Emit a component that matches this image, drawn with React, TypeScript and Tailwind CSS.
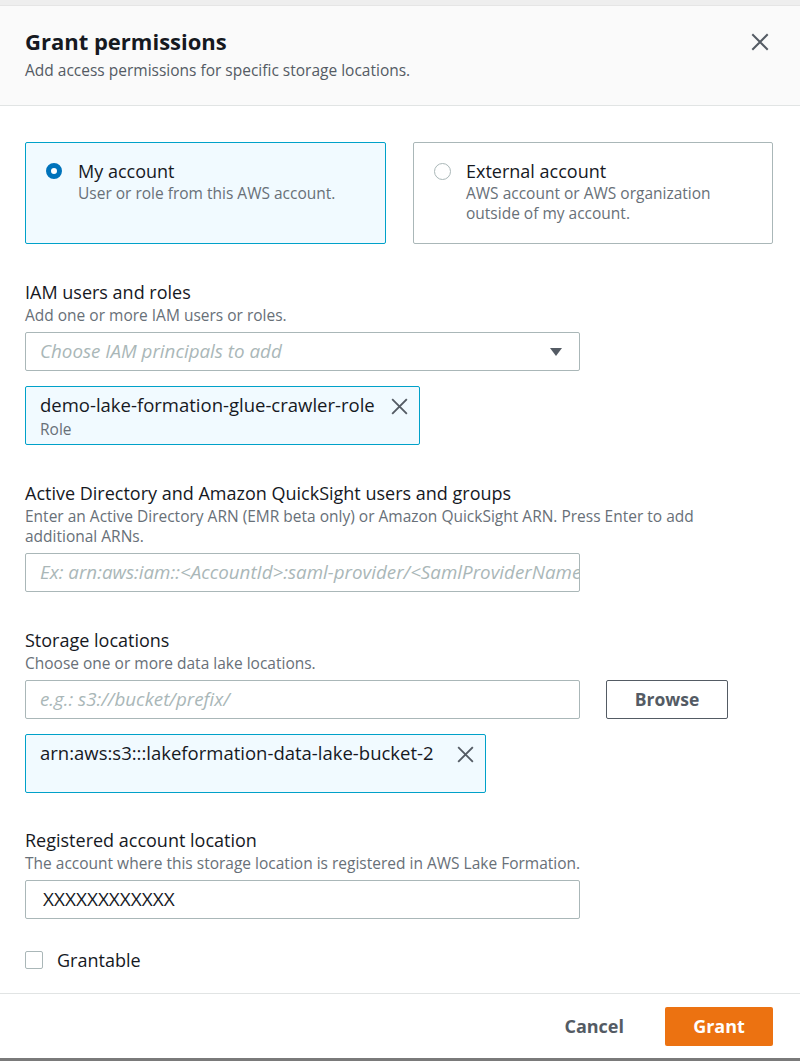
import React from "react";

const font = { fontFamily: '"Open Sans", "Noto Sans", sans-serif' };

function XIcon({ size = 20, className = "" }: { size?: number; className?: string }) {
  return (
    <svg width={size} height={size} viewBox="0 0 20 20" className={className}>
      <path d="M3 3 L17 17 M17 3 L3 17" stroke="currentColor" strokeWidth="2" strokeLinecap="square" fill="none" />
    </svg>
  );
}

function Field({ label, desc, children }: { label: string; desc: React.ReactNode; children: React.ReactNode }) {
  return (
    <div className="flex flex-col">
      <div className="text-[18px] leading-[26px] text-[#16191f]">{label}</div>
      <div className="text-[15.5px] leading-[20px] text-[#687078]">{desc}</div>
      <div className="mt-[7px] flex flex-col">{children}</div>
    </div>
  );
}

function TextInput({ placeholder, value }: { placeholder?: string; value?: string }) {
  return (
    <div className="w-[555px] h-[39px] border border-[#aab7b8] rounded-[2px] flex items-center px-[14px] bg-white overflow-hidden">
      {value ? (
        <span className="text-[19px] text-[#16191f] pl-[3px]">{value}</span>
      ) : (
        <span className="text-[18.8px] italic text-[#aab7b8] whitespace-nowrap">{placeholder}</span>
      )}
    </div>
  );
}

export default function App() {
  return (
    <div style={font} className="w-[800px] h-[1061px] bg-white flex flex-col overflow-hidden">
      <div className="h-[6px] bg-[#eeeeee] border-b border-[#e5e5e5]" />
      <div className="h-[100px] bg-[#fafafa] border-b border-[#e1e4e4] px-[25px] flex items-start justify-between">
        <div className="flex flex-col pt-[21px]">
          <div className="text-[22px] leading-[28px] font-bold text-[#16191f]">Grant permissions</div>
          <div className="text-[15.5px] leading-[20px] text-[#545b64] mt-[5px]">Add access permissions for specific storage locations.</div>
        </div>
        <div className="pt-[26px] pr-[5px] text-[#545b64]">
          <XIcon size={20} />
        </div>
      </div>

      <div className="flex-1 px-[25px] pt-[36px] flex flex-col">
        <div className="flex gap-[27px]">
          <div className="w-[361px] h-[102px] border border-[#00a1c9] bg-[#f1faff] rounded-[2px] flex px-[20px] pt-[16px] gap-[16px]">
            <div className="mt-[4px] w-[16px] h-[16px] rounded-full border-[5px] border-[#0073bb] bg-white shrink-0" />
            <div className="flex flex-col">
              <div className="text-[18px] leading-[24px] text-[#16191f]">My account</div>
              <div className="text-[15.5px] leading-[20px] text-[#687078]">User or role from this AWS account.</div>
            </div>
          </div>
          <div className="w-[360px] h-[102px] border border-[#aab7b8] bg-white rounded-[2px] flex px-[20px] pt-[16px] gap-[15px]">
            <div className="mt-[4px] w-[17px] h-[17px] rounded-full border border-[#aab7b8] bg-white shrink-0" />
            <div className="flex flex-col">
              <div className="text-[18px] leading-[24px] text-[#16191f]">External account</div>
              <div className="text-[15.5px] leading-[20px] text-[#687078]">
                AWS account or AWS organization
                <br />
                outside of my account.
              </div>
            </div>
          </div>
        </div>

        <div className="mt-[35px]">
          <Field label="IAM users and roles" desc="Add one or more IAM users or roles.">
            <div className="w-[555px] h-[39px] border border-[#aab7b8] rounded-[2px] flex items-center justify-between px-[14px] bg-white">
              <span className="text-[18.8px] italic text-[#aab7b8]">Choose IAM principals to add</span>
              <svg width="14" height="10" viewBox="0 0 14 10" className="mr-[2px]">
                <path d="M1 1 L13 1 L7 9 Z" fill="#545b64" />
              </svg>
            </div>
            <div className="mt-[15px] w-[395px] h-[59px] border border-[#00a1c9] bg-[#f1faff] rounded-[2px] flex justify-between pl-[14px] pr-[10px] pt-[6px]">
              <div className="flex flex-col">
                <span className="text-[18.5px] leading-[24px] text-[#16191f] whitespace-nowrap">demo-lake-formation-glue-crawler-role</span>
                <span className="text-[15.5px] leading-[20px] text-[#687078] mt-[2px]">Role</span>
              </div>
              <div className="pt-[4px] text-[#545b64]">
                <XIcon size={19} />
              </div>
            </div>
          </Field>
        </div>

        <div className="mt-[35px]">
          <Field
            label="Active Directory and Amazon QuickSight users and groups"
            desc={
              <>
                Enter an Active Directory ARN (EMR beta only) or Amazon QuickSight ARN. Press Enter to add
                <br />
                additional ARNs.
              </>
            }
          >
            <TextInput placeholder="Ex: arn:aws:iam::<AccountId>:saml-provider/<SamlProviderName>" />
          </Field>
        </div>

        <div className="mt-[35px]">
          <Field label="Storage locations" desc="Choose one or more data lake locations.">
            <div className="flex items-center gap-[26px]">
              <TextInput placeholder="e.g.: s3://bucket/prefix/" />
              <div className="w-[122px] h-[39px] border border-[#545b64] rounded-[2px] flex items-center justify-center text-[17.5px] font-bold text-[#545b64]">
                Browse
              </div>
            </div>
            <div className="mt-[15px] w-[461px] h-[59px] border border-[#00a1c9] bg-[#f1faff] rounded-[2px] flex justify-between pl-[14px] pr-[10px] pt-[6px]">
              <span className="text-[18.5px] leading-[24px] text-[#16191f] whitespace-nowrap">arn:aws:s3:::lakeformation-data-lake-bucket-2</span>
              <div className="pt-[4px] text-[#545b64]">
                <XIcon size={19} />
              </div>
            </div>
          </Field>
        </div>

        <div className="mt-[34px]">
          <Field label="Registered account location" desc="The account where this storage location is registered in AWS Lake Formation.">
            <TextInput value="XXXXXXXXXXXX" />
          </Field>
        </div>

        <div className="mt-[32px] flex items-center gap-[14px] h-[18px]">
          <div className="w-[18px] h-[18px] border border-[#aab7b8] rounded-[2px] bg-white" />
          <span className="text-[18px] leading-[18px] text-[#16191f]">Grantable</span>
        </div>
      </div>

      <div className="h-[65px] border-t border-[#e1e4e4] flex items-center justify-end px-[27px] gap-[41px]">
        <span className="text-[18px] font-bold text-[#545b64]">Cancel</span>
        <div className="w-[108px] h-[39px] bg-[#ec7211] rounded-[2px] flex items-center justify-center text-[18px] font-bold text-white">
          Grant
        </div>
      </div>
      <div className="h-[3px] bg-[#7a7a7a]" />
    </div>
  );
}
